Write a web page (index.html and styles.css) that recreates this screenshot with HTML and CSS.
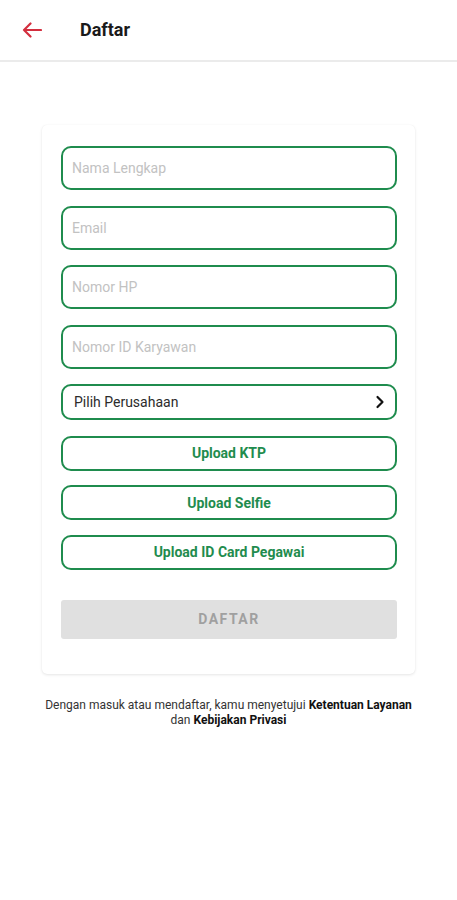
FILE: index.html
```html
<!DOCTYPE html>
<html lang="id">
<head>
<meta charset="utf-8">
<title>Daftar</title>
<link rel="stylesheet" href="styles.css">
</head>
<body>
<header class="topbar">
  <button class="back" aria-label="Kembali">
    <svg width="20" height="16" viewBox="0 0 20 16"><path d="M19 8H2M8.5 1.5L2 8l6.5 6.5" fill="none" stroke="#d32f3f" stroke-width="2.2" stroke-linecap="round" stroke-linejoin="round"/></svg>
  </button>
  <h1 class="title">Daftar</h1>
</header>
<main class="main">
  <form class="card">
    <input class="field" type="text" placeholder="Nama Lengkap">
    <input class="field" type="email" placeholder="Email">
    <input class="field" type="tel" placeholder="Nomor HP">
    <input class="field" type="text" placeholder="Nomor ID Karyawan">
    <button type="button" class="select">
      <span>Pilih Perusahaan</span>
      <svg width="10" height="14" viewBox="0 0 10 14"><path d="M2.5 2l5 5-5 5" fill="none" stroke="#111" stroke-width="2.2" stroke-linecap="round" stroke-linejoin="round"/></svg>
    </button>
    <div class="uploads">
      <button type="button" class="upload">Upload KTP</button>
      <button type="button" class="upload">Upload Selfie</button>
      <button type="button" class="upload">Upload ID Card Pegawai</button>
    </div>
    <button type="button" class="submit" disabled>DAFTAR</button>
  </form>
  <p class="terms">Dengan masuk atau mendaftar, kamu menyetujui <b>Ketentuan Layanan</b><br>dan <b>Kebijakan Privasi</b></p>
</main>
</body>
</html>
```

FILE: styles.css
```css
* { box-sizing: border-box; }
html, body { margin: 0; padding: 0; background: #fff; }
body { font-family: Roboto, "Noto Sans", "Liberation Sans", sans-serif; color: #222; }

.topbar {
  height: 62px;
  display: flex;
  align-items: center;
  border-bottom: 2px solid #ebebeb;
}
.back {
  border: 0;
  background: none;
  padding: 0;
  margin-left: 22px;
  width: 20px;
  height: 16px;
  display: flex;
}
.title {
  margin: 0 0 2px 38px;
  font-size: 18px;
  font-weight: 700;
  color: #1a1a1a;
}

.main { padding: 63px 42px 0; }
.card {
  background: #fff;
  border-radius: 5px;
  box-shadow: 0 1px 3px rgba(0,0,0,0.10), 0 0 1px rgba(0,0,0,0.06);
  padding: 21px 18px 35px 19px;
  display: flex;
  flex-direction: column;
}
.field {
  height: 44px;
  border: 2px solid #1f8c4e;
  border-radius: 10px;
  padding: 0 9px;
  font: 400 14px Roboto, sans-serif;
  color: #333;
  margin-bottom: 15.5px;
  outline: none;
}
.field::placeholder { color: #c2c2c2; }
.select {
  height: 36px;
  border: 2px solid #1f8c4e;
  border-radius: 10px;
  background: #fff;
  display: flex;
  align-items: center;
  justify-content: space-between;
  padding: 0 10px 0 11px;
  font: 400 14px Roboto, sans-serif;
  color: #2b2b2b;
  margin-top: -0.5px;
}
.uploads {
  display: flex;
  flex-direction: column;
  gap: 14.5px;
  margin-top: 16px;
}
.upload {
  height: 35px;
  border: 2px solid #1f8c4e;
  border-radius: 10px;
  background: #fff;
  font: 700 14px Roboto, sans-serif;
  color: #1f8c4e;
}
.submit {
  margin-top: 30px;
  height: 39px;
  border: 0;
  border-radius: 3px;
  background: #e0e0e0;
  color: #a0a0a0;
  font: 700 14px Roboto, sans-serif;
  letter-spacing: 1.5px;
}
.terms {
  margin: 24px -40px 0;
  text-align: center;
  font-size: 12px;
  line-height: 15px;
  color: #333;
}
.terms b { color: #111; }
```
